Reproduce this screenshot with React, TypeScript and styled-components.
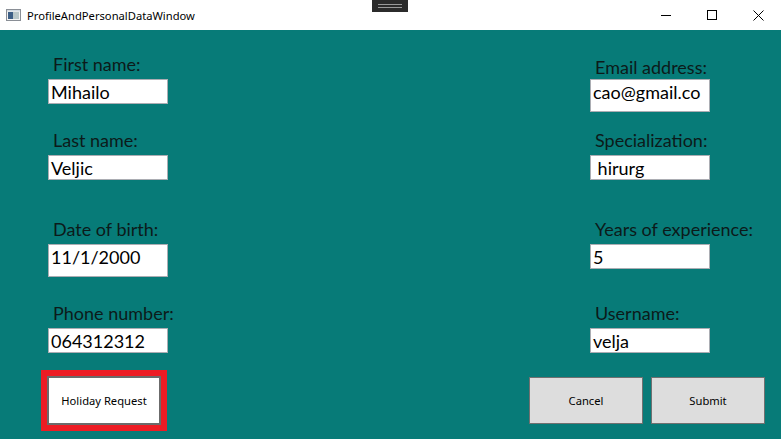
import styled, { createGlobalStyle } from "styled-components";

const GlobalStyle = createGlobalStyle`
  html, body {
    margin: 0;
    padding: 0;
    background: #ffffff;
  }
  * {
    box-sizing: border-box;
  }
`;

const Window = styled.div`
  width: 781px;
  height: 439px;
  display: flex;
  flex-direction: column;
  font-family: "Segoe UI", Lato, "Noto Sans", sans-serif;
  overflow: hidden;
`;

const TitleBar = styled.div`
  position: relative;
  height: 30px;
  display: flex;
  align-items: center;
  background: #ffffff;
  flex-shrink: 0;
`;

const AppIcon = styled.svg`
  margin-left: 6px;
  margin-right: 6px;
`;

const Title = styled.span`
  font-family: "Segoe UI", "Noto Sans", sans-serif;
  font-size: 11.2px;
  color: #000;
`;

// the snap grip that sits over the top edge
const Grip = styled.div`
  position: absolute;
  left: 372px;
  top: 0;
  width: 36px;
  height: 12px;
  background: #2b2b2b;
  display: flex;
  flex-direction: column;
  justify-content: center;
  align-items: center;
  gap: 2px;
  &::before,
  &::after {
    content: "";
    display: block;
    width: 24px;
    height: 1px;
    background: #9a9a9a;
  }
`;

const Controls = styled.div`
  margin-left: auto;
  display: flex;
  height: 100%;
`;

const ControlButton = styled.div`
  width: 46px;
  height: 100%;
  display: flex;
  align-items: center;
  justify-content: center;
`;

const Content = styled.div`
  flex: 1;
  background: #077b78;
  display: flex;
  flex-direction: column;
`;

const Form = styled.div`
  display: grid;
  grid-template-columns: 1fr 120px;
  grid-template-rows: 76px 89px 84px auto;
  padding: 23px 71px 0 48px;
`;

const Field = styled.div`
  display: flex;
  flex-direction: column;
  align-items: flex-start;
`;

const Label = styled.div<{ $drop?: number }>`
  font-size: 18px;
  line-height: 22px;
  color: #0c1a1a;
  margin: ${(p) => p.$drop ?? 0}px 0 ${(p) => 4 - (p.$drop ?? 0)}px 5px;
  white-space: nowrap;
`;

const Input = styled.div<{ $tall?: boolean }>`
  width: 120px;
  height: ${(p) => (p.$tall ? 33 : 25)}px;
  background: #ffffff;
  border: 1px solid #abadb3;
  font-size: 18px;
  line-height: 22px;
  color: #000;
  padding: 1px 2px;
  white-space: pre;
  overflow: hidden;
`;

const Footer = styled.div`
  display: flex;
  align-items: flex-start;
  justify-content: space-between;
  padding: 17px 16px 0 41px;
`;

const HighlightFrame = styled.div`
  border: 6px solid #ed1c24;
  width: 126px;
  height: 61px;
`;

const Button = styled.div<{ $light?: boolean }>`
  width: ${(p) => (p.$light ? "100%" : "114px")};
  height: ${(p) => (p.$light ? "100%" : "47px")};
  background: ${(p) => (p.$light ? "#ffffff" : "#dddddd")};
  border: ${(p) => (p.$light ? "2px solid #6b6b6b" : "1px solid #707070")};
  display: flex;
  align-items: center;
  justify-content: center;
  font-family: "Segoe UI", "Noto Sans", sans-serif;
  font-size: 11.2px;
  color: #000;
`;

const RightButtons = styled.div`
  display: flex;
  gap: 8px;
  margin-top: 7px;
`;

const left = [
  { label: "First name:", value: "Mihailo" },
  { label: "Last name:", value: "Veljic" },
  { label: "Date of birth:", value: "11/1/2000", tall: true },
  { label: "Phone number:", value: "064312312" },
];

const right = [
  { label: "Email address:", value: "cao@gmail.co", drop: 3, tall: true },
  { label: "Specialization:", value: " hirurg" },
  { label: "Years of experience:", value: "5" },
  { label: "Username:", value: "velja" },
];

export default function App() {
  return (
    <>
      <GlobalStyle />
      <Window>
        <TitleBar>
          <AppIcon width="15" height="12" viewBox="0 0 15 12">
            <rect x="0.5" y="0.5" width="14" height="11" fill="#f4f4f4" stroke="#8a8f96" />
            <rect x="2" y="3" width="5" height="7" fill="#3d5f86" />
            <rect x="7" y="3" width="6" height="7" fill="#b9c7c9" />
            <rect x="1" y="1" width="13" height="1.5" fill="#d3dbe2" />
          </AppIcon>
          <Title>ProfileAndPersonalDataWindow</Title>
          <Grip />
          <Controls>
            <ControlButton>
              <svg width="10" height="10" viewBox="0 0 10 10">
                <line x1="0" y1="5.5" x2="10" y2="5.5" stroke="#000" strokeWidth="1" />
              </svg>
            </ControlButton>
            <ControlButton>
              <svg width="10" height="10" viewBox="0 0 10 10">
                <rect x="0.5" y="0.5" width="9" height="9" fill="none" stroke="#000" strokeWidth="1" />
              </svg>
            </ControlButton>
            <ControlButton>
              <svg width="11" height="11" viewBox="0 0 11 11">
                <path d="M0.5 0.5 L10.5 10.5 M10.5 0.5 L0.5 10.5" stroke="#000" strokeWidth="1" />
              </svg>
            </ControlButton>
          </Controls>
        </TitleBar>
        <Content>
          <Form>
            {left.map((f, i) => (
              <>
                <Field key={"l" + i}>
                  <Label>{f.label}</Label>
                  <Input $tall={f.tall}>{f.value}</Input>
                </Field>
                <Field key={"r" + i}>
                  <Label $drop={right[i].drop}>{right[i].label}</Label>
                  <Input $tall={right[i].tall}>{right[i].value}</Input>
                </Field>
              </>
            ))}
          </Form>
          <Footer>
            <HighlightFrame>
              <Button $light>Holiday Request</Button>
            </HighlightFrame>
            <RightButtons>
              <Button>Cancel</Button>
              <Button>Submit</Button>
            </RightButtons>
          </Footer>
        </Content>
      </Window>
    </>
  );
}
